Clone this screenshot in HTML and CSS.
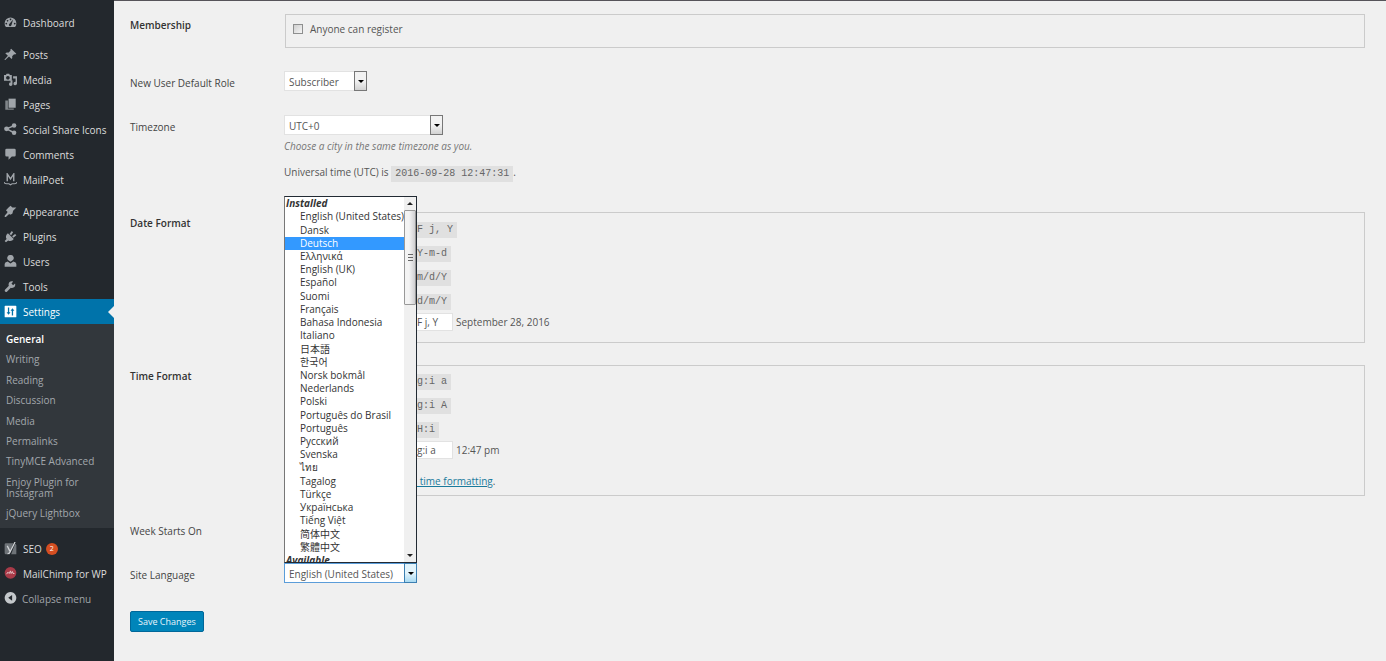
FILE: index.html
```html
<!DOCTYPE html>
<html lang="en">
<head>
<meta charset="utf-8">
<title>General Settings</title>
<link rel="stylesheet" href="styles.css">
</head>
<body>
<div class="layout">
  <nav class="sidebar" aria-label="Main menu">
    <ul class="menu">
      <li><a class="item" href="#"><svg class="icon" viewBox="0 0 20 20"><path fill-rule="evenodd" d="M3 17a9 9 0 1 1 14 0zM10 4a1.2 1.2 0 1 0 .01 0zM5.500 6a1.200 1.200 0 1 0 .01 0zM3.500 10.500a1.200 1.200 0 1 0 .01 0zM16.500 10.500a1.200 1.200 0 1 0 .01 0zM14 5.500L8.500 12a2 2 0 1 0 3 2z"/></svg>Dashboard</a></li>
    </ul>
    <ul class="menu">
      <li><a class="item" href="#"><svg class="icon" viewBox="0 0 20 20"><path d="M11 1l8 8-2 1-1.500-.5-3 3c.5 1.500.3 3.500-.8 4.500l-4-4L2 18.500l-1.500-.5L6 12 2 8c1-1 3-1.200 4.500-.8l3.500-3-.3-1.500z"/></svg>Posts</a></li>
      <li><a class="item" href="#"><svg class="icon" viewBox="0 0 20 20"><path fill-rule="evenodd" d="M0 3h3l1-2h4l1 2h3v9H0zM6 4.500a2.800 2.800 0 1 0 .01 0z"/><path d="M14 5h6v11a2.700 2.700 0 1 1-2.200-2.500V8.500H14zM13 11v6a2.700 2.700 0 1 1-2.200-2.500V13H9v-1.500z"/></svg>Media</a></li>
      <li><a class="item" href="#"><svg class="icon" viewBox="0 0 20 20"><path d="M7 1h11v14H7z"/><path d="M2 4h4v12h9v2H2z" opacity=".75"/></svg>Pages</a></li>
      <li><a class="item" href="#"><svg class="icon" viewBox="0 0 20 20"><circle cx="4" cy="9" r="3.800"/><circle cx="15.500" cy="3.800" r="3.500"/><circle cx="15.500" cy="15" r="3.500"/><path d="M15.500 4L4 9l11.500 6" fill="none" stroke="currentColor" stroke-width="2.200"/></svg>Social Share Icons</a></li>
      <li><a class="item" href="#"><svg class="icon" viewBox="0 0 20 20"><path d="M4 1h12q2 0 2 2v8q0 2-2 2h-4l-5 5v-5H4q-2 0-2-2V3q0-2 2-2z"/></svg>Comments</a></li>
      <li><a class="item" href="#"><svg class="icon" viewBox="0 0 20 20"><path d="M5 12.500V1.500L10 9l5-7.500v11" fill="none" stroke="currentColor" stroke-width="2.200"/><path d="M0 14q1 2.500 4 2.500h3.500L10 18l2.500-1.500H16q3 0 4-2.500" fill="none" stroke="currentColor" stroke-width="1.800"/></svg>MailPoet</a></li>
    </ul>
    <ul class="menu">
      <li><a class="item" href="#"><svg class="icon" viewBox="0 0 20 20"><path d="M7 4l3-3 3 3 6 0-5 5-1 4-3 2-7-7zM5.500 9l4.500 4.500-3 1L3 18.500H1l.3-2.500L5 12z"/></svg>Appearance</a></li>
      <li><a class="item" href="#"><svg class="icon" viewBox="0 0 20 20"><path d="M6 5l9 9c-2 3-6 4-8.500 2L3 19l-2-2 3-3C2 11 3 7 6 5zM8.500 6L12 1.500l2 2L11 8zM12.500 9.500L17 6l2 2-4.500 4z"/></svg>Plugins</a></li>
      <li><a class="item" href="#"><svg class="icon" viewBox="0 0 20 20"><path d="M10 0a4.600 4.600 0 0 1 2.800 8.500L10 10.500 7.200 8.500A4.600 4.600 0 0 1 10 0zM5.500 10l4.500 3 4.500-3q4.500 1 4.500 4v4H1v-4q0-3 4.500-4z"/></svg>Users</a></li>
      <li><a class="item" href="#"><svg class="icon" viewBox="0 0 20 20"><path d="M17 5.500L14 8l-2.500-2.500L14 2.500c-3-1.500-7 .5-7 4.500 0 1 .2 1.500.5 2L1.500 15c-1.500 2 1 4.500 3 3l6-6c4 1.500 8-2 6.500-6.500z"/></svg>Tools</a></li>
      <li><a class="item current" href="#" aria-current="page"><svg class="icon" viewBox="0 0 20 20"><path fill-rule="evenodd" d="M2 1h16q1 0 1 1v16q0 1-1 1H2q-1 0-1-1V2q0-1 1-1zM6 4v7H4l3 4 3-4H8V4zM12 16V9h-2l3-4 3 4h-2v7z"/></svg>Settings</a>
        <ul class="submenu">
          <li><a class="active" href="#">General</a></li>
          <li><a href="#">Writing</a></li>
          <li><a href="#">Reading</a></li>
          <li><a href="#">Discussion</a></li>
          <li><a href="#">Media</a></li>
          <li><a href="#">Permalinks</a></li>
          <li><a href="#">TinyMCE Advanced</a></li>
          <li><a href="#">Enjoy Plugin for Instagram</a></li>
          <li><a href="#">jQuery Lightbox</a></li>
        </ul>
      </li>
    </ul>
    <ul class="menu extras">
      <li><a class="item" href="#"><svg class="icon" viewBox="0 0 20 20"><path d="M3 2h11l-5 17H3q-2 0-2-2V4q0-2 2-2zM17 3q2 0 2 2v14h-8z" opacity=".6"/><path d="M5 6l4 8M17 0L9.500 15q-1 3-4 3" fill="none" stroke="#d0d3d6" stroke-width="2"/></svg>SEO <span class="count">2</span></a></li>
      <li><a class="item" href="#"><svg class="icon" viewBox="0 0 20 20"><circle cx="10" cy="9" r="9" fill="#a83a48"/><path d="M4 11l2-3 2 2 2-4 1 4 2-3 1 3h2" fill="none" stroke="#e3c5c8" stroke-width="1.500"/></svg>MailChimp for WP</a></li>
      <li><button class="item collapse" type="button"><svg class="icon" viewBox="0 0 20 20"><path fill-rule="evenodd" d="M10 0a9 9 0 1 1-.01 0zM12.500 4.500L6.500 9l6 4.500z"/></svg>Collapse menu</button></li>
    </ul>
  </nav>

  <main class="content">
    <form class="settings">
      <div class="row">
        <div class="label strong" id="membership">Membership</div>
        <div class="panel" role="group" aria-labelledby="membership">
          <label class="check"><input type="checkbox">Anyone can register</label>
        </div>
      </div>
      <div class="row">
        <label class="label" for="role">New User Default Role</label>
        <div class="picker role">
          <select id="role"><option>Subscriber</option></select>
          <span class="arrow"></span>
        </div>
      </div>
      <div class="row zone-row">
        <label class="label" for="zone">Timezone</label>
        <div>
          <div class="picker zone">
            <select id="zone"><option>UTC+0</option></select>
            <span class="arrow"></span>
          </div>
          <p class="hint">Choose a city in the same timezone as you.</p>
          <p class="utc">Universal time (UTC) is <code>2016-09-28 12:47:31</code>.</p>
        </div>
      </div>
      <div class="row">
        <div class="label strong" id="date-format">Date Format</div>
        <div class="panel formats date" role="radiogroup" aria-labelledby="date-format">
          <div class="format"><input type="radio" name="date" id="d1" checked><label for="d1"><code>F j, Y</code></label></div>
          <div class="format"><input type="radio" name="date" id="d2"><label for="d2"><code>Y-m-d</code></label></div>
          <div class="format"><input type="radio" name="date" id="d3"><label for="d3"><code>m/d/Y</code></label></div>
          <div class="format"><input type="radio" name="date" id="d4"><label for="d4"><code>d/m/Y</code></label></div>
          <div class="format custom"><input type="radio" name="date" aria-label="Custom"><input class="text" type="text" value="F j, Y" aria-label="Custom date format"><span>September 28, 2016</span></div>
        </div>
      </div>
      <div class="row">
        <div class="label strong" id="time-format">Time Format</div>
        <div class="panel formats time" role="radiogroup" aria-labelledby="time-format">
          <div class="format"><input type="radio" name="time" id="t1" checked><label for="t1"><code>g:i a</code></label></div>
          <div class="format"><input type="radio" name="time" id="t2"><label for="t2"><code>g:i A</code></label></div>
          <div class="format"><input type="radio" name="time" id="t3"><label for="t3"><code>H:i</code></label></div>
          <div class="format custom"><input type="radio" name="time" aria-label="Custom"><input class="text" type="text" value="g:i a" aria-label="Custom time format"><span>12:47 pm</span></div>
          <p class="docs"><a href="#">d time formatting</a>.</p>
        </div>
      </div>
      <div class="row">
        <label class="label" for="week">Week Starts On</label>
        <div class="picker role">
          <select id="week"></select>
          <span class="arrow"></span>
        </div>
      </div>
      <div class="row">
        <label class="label" for="language">Site Language</label>
        <div class="picker language">
          <select id="language"><option>English (United States)</option></select>
          <span class="arrow"></span>
          <div class="popup">
            <ul class="options" role="listbox" aria-label="Site Language">
              <li class="group">Installed</li>
              <li role="option">English (United States)</li>
              <li role="option">Dansk</li>
              <li role="option" class="selected" aria-selected="true">Deutsch</li>
              <li role="option">Ελληνικά</li>
              <li role="option">English (UK)</li>
              <li role="option">Español</li>
              <li role="option">Suomi</li>
              <li role="option">Français</li>
              <li role="option">Bahasa Indonesia</li>
              <li role="option">Italiano</li>
              <li role="option" lang="ja">日本語</li>
              <li role="option" lang="ko">한국어</li>
              <li role="option">Norsk bokmål</li>
              <li role="option">Nederlands</li>
              <li role="option">Polski</li>
              <li role="option">Português do Brasil</li>
              <li role="option">Português</li>
              <li role="option">Русский</li>
              <li role="option">Svenska</li>
              <li role="option">ไทย</li>
              <li role="option">Tagalog</li>
              <li role="option">Türkçe</li>
              <li role="option">Українська</li>
              <li role="option">Tiếng Việt</li>
              <li role="option" lang="zh-Hans">简体中文</li>
              <li role="option" lang="zh-Hant">繁體中文</li>
              <li class="group">Available</li>
            </ul>
            <div class="scrollbar">
              <span class="step up"></span>
              <span class="thumb"><svg viewBox="0 0 5 7"><path d="M0 .5h5M0 3.500h5M0 6.500h5" stroke="#666"/></svg></span>
              <span class="step down"></span>
            </div>
          </div>
        </div>
      </div>
      <button class="save" type="submit">Save Changes</button>
    </form>
  </main>
</div>
</body>
</html>
```
FILE: styles.css
```css
* { box-sizing: border-box; }

body {
  margin: 0;
  background: #f0f0f0;
  color: #555;
  font: 10px/16px "Open Sans", "Noto Sans", sans-serif;
}

ul { margin: 0; padding: 0; list-style: none; }
p { margin: 0; }
a { color: #1a7a9c; }
input, select, button { font: inherit; color: inherit; margin: 0; }

.layout {
  display: flex;
  min-height: 100vh;
  border-top: 1px solid #56545a;
}

/* Sidebar */
.sidebar {
  width: 114px;
  flex: none;
  margin-top: -1px;
  padding-top: 10px;
  background: #23282d;
}
.menu { margin-bottom: 7px; }
.extras { padding-top: 1px; }
.item {
  position: relative;
  display: flex;
  align-items: center;
  width: 100%;
  height: 25px;
  padding: 0 0 0 4px;
  border: 0;
  background: none;
  color: #dcdcdc;
  text-decoration: none;
  white-space: nowrap;
}
.icon {
  flex: none;
  width: 13px;
  height: 13px;
  margin-right: 6px;
  fill: #a0a5aa;
  color: #a0a5aa;
}
.current { background: #0073aa; color: #fff; }
.current .icon { fill: #fff; }
.current::after {
  content: "";
  position: absolute;
  right: 0;
  border: 6px solid transparent;
  border-right-color: #f0f0f0;
  border-left: 0;
}
.count {
  width: 12px;
  height: 12px;
  margin-left: 4px;
  border-radius: 50%;
  background: #d54e21;
  color: #fff;
  font-size: 7px;
  line-height: 12px;
  text-align: center;
}
.collapse { color: #a0a5aa; }
.collapse .icon { margin-right: 5px; fill: #c4c8cb; }
.submenu {
  display: flex;
  flex-direction: column;
  justify-content: space-between;
  min-height: 204px;
  padding: 5px 0;
  background: #32373c;
}
.submenu a {
  display: block;
  padding: 5px 24px 4px 6px;
  color: #a2a7ac;
  line-height: 11px;
  text-decoration: none;
}
.submenu li:nth-child(7) a { white-space: nowrap; }
.submenu .active { color: #fff; font-weight: 600; }

/* Settings form */
.content { flex: 1; min-width: 0; padding: 13px 21px 28px 16px; }
.row {
  display: grid;
  grid-template-columns: 154px 1fr;
  margin-bottom: 24px;
}
.label { padding-top: 4px; color: #444; }
.strong { font-weight: 600; padding-top: 3px; color: #333; }
.panel {
  margin-left: 1px;
  padding: 3px 7px;
  border: 1px solid #cbcbcb;
  min-height: 34px;
}
.row:first-child { margin-bottom: 23px; }
.check { display: flex; align-items: center; height: 22px; }
.check input {
  appearance: none;
  width: 10px;
  height: 10px;
  margin-right: 7px;
  border: 1px solid #8e8f8f;
  background: linear-gradient(135deg, #cfcfcf, #f6f6f6);
}

.picker { position: relative; display: flex; height: 20px; }
.role { width: 83px; }
.zone { width: 159px; }
.language { width: 133px; }
.picker select {
  appearance: none;
  width: 100%;
  padding: 1px 16px 0 4px;
  border: 1px solid #e2e2e2;
  border-radius: 0;
  background: #fff;
}
.arrow {
  position: absolute;
  inset: 0 0 0 auto;
  display: grid;
  place-items: center;
  width: 13px;
  border: 1px solid #777;
  background: linear-gradient(#f2f2f2 50%, #d2d2d2);
  pointer-events: none;
}
.arrow::before {
  content: "";
  border: 3px solid transparent;
  border-top-color: #000;
  border-bottom: 0;
}
.language select { border-color: #5b9dd9; }
.language .arrow {
  border-color: #3c7fb1;
  background: linear-gradient(#e3f4fc 50%, #a9daf2);
}

.zone-row { margin-bottom: 32px; }
.hint { margin-top: 3px; color: #777; font-style: italic; }
.utc { margin-top: 10px; }
code {
  padding: 2px 4px 3px;
  background: #e0e0e0;
  color: #666;
  font: 10px/12px "Liberation Mono", monospace;
}
.format {
  display: grid;
  grid-template-columns: 120px auto 1fr;
  align-items: center;
  height: 24px;
}
.format input[type="radio"] { width: 10px; height: 10px; }
.custom { column-gap: 3px; grid-template-columns: 116px auto 1fr; height: 18px; }
.text {
  width: 41px;
  height: 18px;
  padding: 0 4px;
  border: 1px solid #e2e2e2;
  background: #fff;
}
.docs { margin: 14px 0 3px 118px; }
.formats { min-height: 131px; }
.date { padding-top: 3px; }
.time { padding-top: 2px; }
.formats .custom { margin-top: 1px; }
.row:nth-child(4) { margin-bottom: 22px; }
.row:nth-child(5) { margin-bottom: 23px; }

/* Open language list */
.popup {
  position: absolute;
  left: 0;
  bottom: 100%;
  display: flex;
  width: 133px;
  height: 367px;
  overflow: hidden;
  border: 1px solid #222a33;
  border-left-color: #777;
  background: #fff;
  color: #333;
}
.options {
  display: flex;
  flex-direction: column;
  flex: 1;
  min-width: 0;
  height: 370px;
  font: 10px/13px "Open Sans", "Noto Sans", "Noto Sans CJK JP", "Noto Sans CJK KR", sans-serif;
  white-space: nowrap;
}
.options li { display: flex; flex: 1; align-items: center; padding-left: 15px; }
.options .group { padding-left: 1px; font-weight: 700; font-style: italic; }
.options .selected { background: #3399ff; color: #fff; }
.scrollbar {
  display: flex;
  flex: none;
  flex-direction: column;
  width: 12px;
  background: #f0f0f0;
}
.step { display: grid; place-items: center; height: 13px; }
.step::before { content: ""; border: 3px solid transparent; }
.up::before { border-bottom-color: #222; border-top: 0; }
.down::before { border-top-color: #222; border-bottom: 0; }
.down { margin-top: auto; }
.thumb {
  display: grid;
  place-items: center;
  height: 95px;
  border: 1px solid #999;
  border-radius: 1px;
  background: linear-gradient(90deg, #f4f4f4 40%, #cfcfd2);
}
.thumb svg { width: 5px; height: 7px; }

.row:nth-child(7) { margin-bottom: 28px; }
.save {
  display: block;
  height: 21px;
  padding: 0 7px;
  border: 1px solid #006799;
  border-radius: 2px;
  background: #0085ba;
  color: #e8f4fa;
  font-size: 9px;
  line-height: 18px;
}
```
